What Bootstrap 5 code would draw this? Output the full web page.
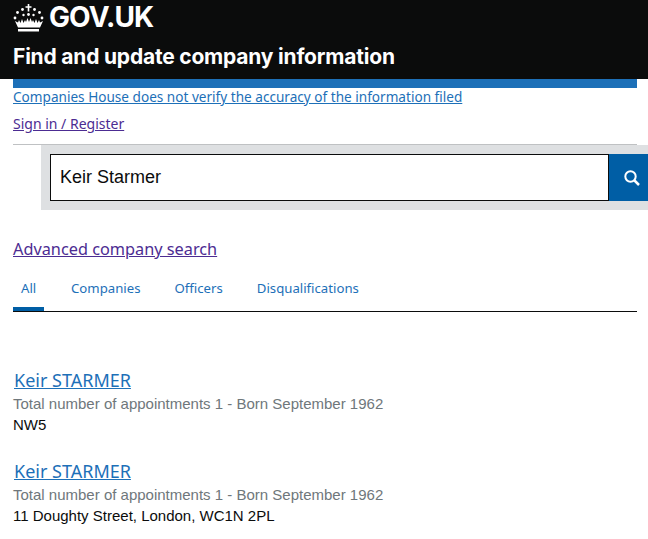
<!DOCTYPE html>
<html lang="en">
<head>
    <meta charset="UTF-8">
    <meta name="viewport" content="width=device-width, initial-scale=1.0">
    <title>Find and update company information - GOV.UK</title>
    <link href="https://cdn.jsdelivr.net/npm/bootstrap@5.3.0/dist/css/bootstrap.min.css" rel="stylesheet">
    <style>
        body {
            font-family: "Noto Sans", sans-serif;
            color: #0b0c0c;
            overflow: hidden;
        }
        a { color: #1d70b8; }
        .site-head {
            background: #0b0c0c;
            color: #fff;
            height: 79px;
            padding-left: 13px;
            font-family: Inter, sans-serif;
        }
        .brand-row { height: 34px; gap: 5px; }
        .brand-name { font-size: 28px; font-weight: 700; line-height: 34px; letter-spacing: -0.9px; }
        .service-name { font-size: 21px; font-weight: 700; line-height: 28px; margin-top: 9px; letter-spacing: -0.2px; }
        .page-wrap { padding: 0 11px 0 13px; }
        .blue-rule { height: 9px; background: #1d70b8; }
        .notice-link { display: block; font-size: 13.6px; line-height: 18px; }
        .sign-link { color: #4c2c92; font-size: 14px; }
        .sign-row { margin-top: 7px; padding-bottom: 10px; line-height: 20px; border-bottom: 1px solid #bfc1c3; }
        .search-panel {
            background: #dee0e2;
            margin: 0 -11px 0 28px;
            padding: 9px 0 9px 9px;
        }
        .search-box {
            height: 47px;
            border: 1px solid #0b0c0c;
            background: #fff;
            font-family: "Liberation Sans", sans-serif;
            font-size: 18px;
            padding: 0 9px;
        }
        .search-btn { width: 39px; height: 47px; background: #005ea5; border: 0; padding: 0 0 0 7px; }
        .adv-link { color: #4c2c92; font-size: 16.3px; }
        .adv-row { margin-top: 27px; line-height: 24px; }
        .result-tabs { margin-top: 3px; border-bottom: 1px solid #0b0c0c; height: 48px; gap: 19px; }
        .tab-item { padding: 14px 7px 0 8px; }
        .tab-item a { font-size: 13.2px; line-height: 20px; text-decoration: none; display: block; }
        .tab-active { border-bottom: 4px solid #005ea5; min-width: 31px; }
        .hit { font-family: "Liberation Sans", sans-serif; font-size: 15px; line-height: 21px; }
        .hit-title { font-family: "Noto Sans", sans-serif; font-size: 18px; line-height: 24px; display: block; width: fit-content; margin: 0 0 1px 1px; }
        .hit-meta { color: #6f777b; }
        .hits { margin-top: 56px; }
    </style>
</head>
<body>

<header class="site-head">
    <div class="brand-row d-flex align-items-center">
        <svg width="31" height="30" viewBox="0 0 31 30" fill="#fff">
            <path d="M14.700 2h1.600v2.200h2.200v1.600h-2.200v3.700h-1.600V5.800h-2.200V4.200h2.200z"/>
            <circle cx="9.500" cy="7.500" r="1.400"/><circle cx="21.500" cy="7.500" r="1.400"/>
            <circle cx="4.500" cy="10.500" r="1.400"/><circle cx="26.500" cy="10.500" r="1.400"/>
            <circle cx="2" cy="16" r="1.400"/><circle cx="29" cy="16" r="1.400"/>
            <circle cx="10.500" cy="13" r="1.200"/><circle cx="20.500" cy="13" r="1.200"/><circle cx="15.500" cy="12.500" r="1.400"/>
            <path d="M2 19l3 1.500 1-2.500 1.500 3 1.500-4 1.500 4 1.500-3 1 2 1.500-4 1.500 4 1.500-4 1.500 4 1-2 1.500 3 1.500-4 1.500 4 1.500-3 1 2.500 3-1.500-3 6.500H5z"/>
            <path d="M5 27h21v2.500H5z"/>
        </svg>
        <span class="brand-name">GOV.UK</span>
    </div>
    <div class="service-name">Find and update company information</div>
</header>

<main class="page-wrap">
    <div class="blue-rule"></div>
    <a class="notice-link" href="#">Companies House does not verify the accuracy of the information filed</a>
    <div class="sign-row"><a class="sign-link" href="#">Sign in / Register</a></div>

    <form class="search-panel d-flex">
        <div class="search-box flex-grow-1 d-flex align-items-center">Keir Starmer</div>
        <button type="button" class="search-btn d-flex align-items-center justify-content-center" aria-label="Search">
            <svg width="16" height="16" viewBox="0 0 16 16" fill="none" stroke="#fff" stroke-width="2"><circle cx="6.500" cy="6.500" r="5.200"/><path d="M10.500 10.500l4.500 4.500" stroke-width="2.500"/></svg>
        </button>
    </form>

    <div class="adv-row"><a class="adv-link" href="#">Advanced company search</a></div>

    <nav class="result-tabs d-flex">
        <div class="tab-item tab-active"><a href="#">All</a></div>
        <div class="tab-item"><a href="#">Companies</a></div>
        <div class="tab-item"><a href="#">Officers</a></div>
        <div class="tab-item"><a href="#">Disqualifications</a></div>
    </nav>

    <div class="hits">
        <div class="hit">
            <a class="hit-title" href="#">Keir STARMER</a>
            <div class="hit-meta">Total number of appointments 1 - Born September 1962</div>
            <div>NW5</div>
        </div>
        <div class="hit mt-4">
            <a class="hit-title" href="#">Keir STARMER</a>
            <div class="hit-meta">Total number of appointments 1 - Born September 1962</div>
            <div>11 Doughty Street, London, WC1N 2PL</div>
        </div>
    </div>
</main>

</body>
</html>
